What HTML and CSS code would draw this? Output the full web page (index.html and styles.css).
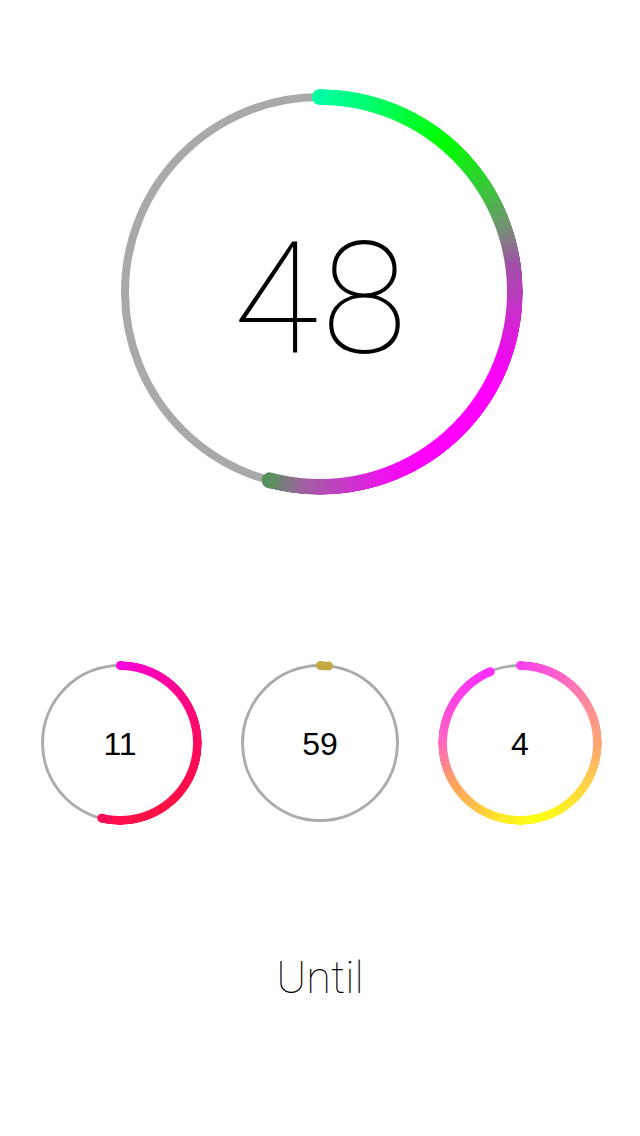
FILE: index.html
```html
<!DOCTYPE html>
<html lang="en">
<head>
<meta charset="utf-8">
<title>Countdown</title>
<link rel="stylesheet" href="styles.css">
</head>
<body>
<main class="page">
  <section class="ring ring-big">
    <div class="track"></div>
    <div class="arc arc-big"></div>
    <span class="cap cap-start cap-big-start"></span>
    <span class="cap cap-big-end" style="--a:195deg"></span>
    <div class="value value-big">48</div>
  </section>

  <section class="row">
    <div class="ring ring-small">
      <div class="track"></div>
      <div class="arc arc-hours"></div>
      <span class="cap cap-start cap-hours-start"></span>
      <span class="cap cap-hours-end" style="--a:194deg"></span>
      <div class="value value-small">11</div>
    </div>
    <div class="ring ring-small">
      <div class="track"></div>
      <div class="arc arc-mins"></div>
      <span class="cap cap-start cap-mins"></span>
      <span class="cap cap-mins" style="--a:6deg"></span>
      <div class="value value-small">59</div>
    </div>
    <div class="ring ring-small">
      <div class="track"></div>
      <div class="arc arc-days"></div>
      <span class="cap cap-start cap-days-start"></span>
      <span class="cap cap-days-end" style="--a:337deg"></span>
      <div class="value value-small">4</div>
    </div>
  </section>

  <p class="label">Until</p>
</main>
</body>
</html>
```

FILE: styles.css
```css
html, body {
  margin: 0;
  padding: 0;
  background: #ffffff;
}

body {
  width: 640px;
  height: 1136px;
  overflow: hidden;
  font-family: Roboto, "Liberation Sans", sans-serif;
  color: #000;
}

.page {
  display: flex;
  flex-direction: column;
  align-items: center;
}

.ring {
  position: relative;
  display: grid;
  place-items: center;
}

.ring-big {
  --size: 406px;
  --stroke: 16px;
  --track: 8px;
  width: var(--size);
  height: var(--size);
  margin-top: 89px;
}

.ring-small {
  --size: 164px;
  --stroke: 9px;
  --track: 3px;
  width: var(--size);
  height: var(--size);
}

.track {
  position: absolute;
  inset: calc((var(--stroke) - var(--track)) / 2);
  border: var(--track) solid #a9a9a9;
  border-radius: 50%;
}

.ring-small .track {
  border-color: #ababab;
}

.arc {
  position: absolute;
  inset: 0;
  border-radius: 50%;
  -webkit-mask-image: radial-gradient(closest-side, transparent calc(100% - var(--stroke) - 0.5px), #000 calc(100% - var(--stroke) + 0.5px), #000 calc(100% - 0.5px), transparent 100%);
  mask-image: radial-gradient(closest-side, transparent calc(100% - var(--stroke) - 0.5px), #000 calc(100% - var(--stroke) + 0.5px), #000 calc(100% - 0.5px), transparent 100%);
}

.arc-big {
  background: conic-gradient(from 0deg,
    #00ffa0 0deg, #00ff78 12deg, #00ff30 28deg, #00ff00 40deg,
    #20e020 50deg, #40c040 60deg, #7a8a7a 72deg, #a050a8 82deg,
    #c830c8 95deg, #f008f0 110deg, #ff00ff 120deg, #ff00ff 150deg,
    #e818e8 162deg, #c040c0 175deg, #a060a0 185deg, #5a9060 195deg,
    transparent 195deg);
}

.arc-hours {
  background: conic-gradient(from 0deg,
    #ff00dc 0deg, #ff058c 50deg, #ff0a5c 90deg, #ff1044 140deg,
    #ff1048 170deg, #ff0c56 194deg, transparent 194deg);
}

.arc-mins {
  background: conic-gradient(from 0deg, #c5a846 0deg, #c5a846 6deg, transparent 6deg);
}

.arc-days {
  background: conic-gradient(from 0deg,
    #ff40ee 0deg, #ff62c8 30deg, #ff8c9c 60deg, #ffa474 90deg,
    #ffd04a 120deg, #fff020 150deg, #ffff10 170deg, #ffe828 195deg,
    #ffc048 215deg, #ffa060 240deg, #ff68c0 270deg, #ff48e0 300deg,
    #ff2cff 337deg, transparent 337deg);
}

.cap {
  position: absolute;
  top: 0;
  left: calc(50% - var(--stroke) / 2);
  width: var(--stroke);
  height: var(--stroke);
  border-radius: 50%;
  transform-origin: calc(var(--stroke) / 2) calc(var(--size) / 2);
  transform: rotate(var(--a, 0deg));
}

.cap-big-start { background: #00ffa0; }
.cap-big-end { background: #5a9060; }
.cap-hours-start { background: #ff00dc; }
.cap-hours-end { background: #ff0c56; }
.cap-mins { background: #c5a846; }
.cap-days-start { background: #ff40ee; }
.cap-days-end { background: #ff2cff; }

.value {
  position: relative;
  line-height: 1;
}

.value-big {
  font-family: Roboto, "Liberation Sans", sans-serif;
  font-weight: 100;
  font-size: 156px;
  letter-spacing: 3px;
  padding-top: 14px;
  padding-left: 3px;
}

.value-small {
  font-family: "Liberation Sans", Arial, sans-serif;
  font-weight: 400;
  font-size: 32px;
  padding-top: 2px;
}

.row {
  display: flex;
  gap: 36px;
  margin-top: 166px;
}

.label {
  margin: 130px 0 0;
  font-family: Roboto, "Liberation Sans", sans-serif;
  font-weight: 100;
  font-size: 45px;
  line-height: 1;
  color: #000;
}
```
